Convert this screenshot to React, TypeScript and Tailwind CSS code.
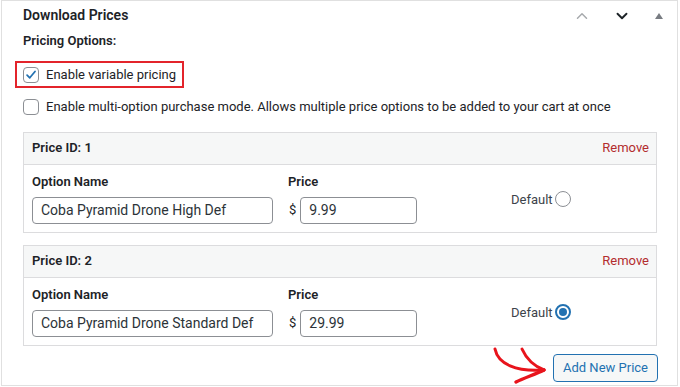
import { ChevronUp, ChevronDown } from "lucide-react";

const PRICES = [
  { id: 1, name: "Coba Pyramid Drone High Def", price: "9.99", isDefault: false },
  { id: 2, name: "Coba Pyramid Drone Standard Def", price: "29.99", isDefault: true },
];

function PriceRow({ id, name, price, isDefault }: (typeof PRICES)[number]) {
  return (
    <div className="border border-[#dcdcde] bg-white">
      <div className="flex h-[32px] items-center justify-between border-b border-[#dcdcde] bg-[#f6f7f7] pl-[8px] pr-[7px]">
        <span className="text-[13px] font-semibold text-[#1d2327]">Price ID: {id}</span>
        <span className="text-[13px] text-[#b32d2e]">Remove</span>
      </div>
      <div className="flex pl-[8px] pt-[8px] pb-[8px]">
        <div className="w-[256px]">
          <div className="mb-[7px] h-[17px] text-[13px] font-semibold leading-[17px] text-[#1d2327]">Option Name</div>
          <div className="flex h-[27px] w-[241px] items-center whitespace-nowrap rounded-[4px] border border-[#8c8f94] px-[8px] text-[14px] text-[#2c3338]">
            {name}
          </div>
        </div>
        <div className="w-[223px]">
          <div className="mb-[7px] h-[17px] text-[13px] font-semibold leading-[17px] text-[#1d2327]">Price</div>
          <div className="flex items-center">
            <span className="ml-[1px] mr-[4px] text-[13px] text-[#1d2327]">$</span>
            <div className="flex h-[27px] w-[117px] items-center rounded-[4px] border border-[#8c8f94] px-[8px] text-[14px] text-[#2c3338]">
              {price}
            </div>
          </div>
        </div>
        <div className="flex items-center gap-[2px] pt-[17px] self-start">
          <span className="text-[13px] text-[#3c434a]">Default</span>
          {isDefault ? (
            <span className="flex h-[16px] w-[16px] items-center justify-center rounded-full border-2 border-[#2271b1] bg-white">
              <span className="h-[8px] w-[8px] rounded-full bg-[#2271b1]" />
            </span>
          ) : (
            <span className="h-[16px] w-[16px] rounded-full border border-[#8c8f94] bg-white" />
          )}
        </div>
      </div>
    </div>
  );
}

function Checkbox({ checked }: { checked?: boolean }) {
  return (
    <span className="flex h-[16px] w-[16px] shrink-0 items-center justify-center rounded-[4px] border border-[#8c8f94] bg-white">
      {checked && (
        <svg viewBox="0 0 16 16" className="h-[14px] w-[14px]">
          <path d="M3.5 8.2 L6.6 11.2 L12.6 4" fill="none" stroke="#2271b1" strokeWidth={2} strokeLinecap="round" strokeLinejoin="round" />
        </svg>
      )}
    </span>
  );
}

export default function App() {
  return (
    <div className="h-[387px] w-[680px] bg-white font-['Roboto',sans-serif] text-[#1d2327]">
      <div className="relative ml-px h-[386px] w-[677px] border border-[#e0e0e0] bg-white">
        <div className="flex h-[29px] items-center justify-between pl-[21px] pr-[14px]">
          <h2 className="text-[14px] font-semibold text-[#1d2327]">Download Prices</h2>
          <div className="flex items-center">
            <ChevronUp className="h-[18px] w-[18px] text-[#a7aaad]" strokeWidth={2} />
            <ChevronDown className="ml-[22px] h-[18px] w-[18px] text-[#1d2327]" strokeWidth={2.5} />
            <span className="ml-[24px] h-0 w-0 border-x-[4px] border-b-[6px] border-x-transparent border-b-[#787c82]" />
          </div>
        </div>

        <div className="pl-[21px] pr-[20px]">
          <div className="mt-[2px] h-[17px] text-[13px] font-semibold leading-[17px]">Pricing Options:</div>

          <div className="mt-[12px] ml-[-8px] flex h-[27px] w-[169px] items-center gap-[7px] whitespace-nowrap border-2 border-[#e3242b] pl-[6px]">
            <Checkbox checked />
            <span className="text-[13px] text-[#1d2327]">Enable variable pricing</span>
          </div>

          <div className="mt-[9px] flex items-center gap-[7px] whitespace-nowrap">
            <Checkbox />
            <span className="text-[13px] text-[#1d2327]">
              Enable multi-option purchase mode. Allows multiple price options to be added to your cart at once
            </span>
          </div>

          <div className="mt-[15px] flex flex-col gap-[12px]">
            {PRICES.map((p) => (
              <PriceRow key={p.id} {...p} />
            ))}
          </div>

          <div className="mt-[8px] flex justify-end">
            <button className="mr-[-1px] h-[28px] w-[105px] rounded-[4px] border border-[#2271b1] bg-[#f6f7f7] text-[13px] text-[#2271b1]">
              Add New Price
            </button>
          </div>
        </div>

        <svg className="absolute left-[490px] top-[345px] h-[40px] w-[60px]" viewBox="0 0 60 40" fill="none">
          <path d="M3 3 C6 18 24 26 52 24" stroke="#e8141c" strokeWidth={3} strokeLinecap="round" />
          <path d="M30 3 C34 12 42 20 52 24" stroke="#e8141c" strokeWidth={3} strokeLinecap="round" />
          <path d="M52 24 C44 28 32 32 24 36" stroke="#e8141c" strokeWidth={3.5} strokeLinecap="round" />
        </svg>
      </div>
    </div>
  );
}
